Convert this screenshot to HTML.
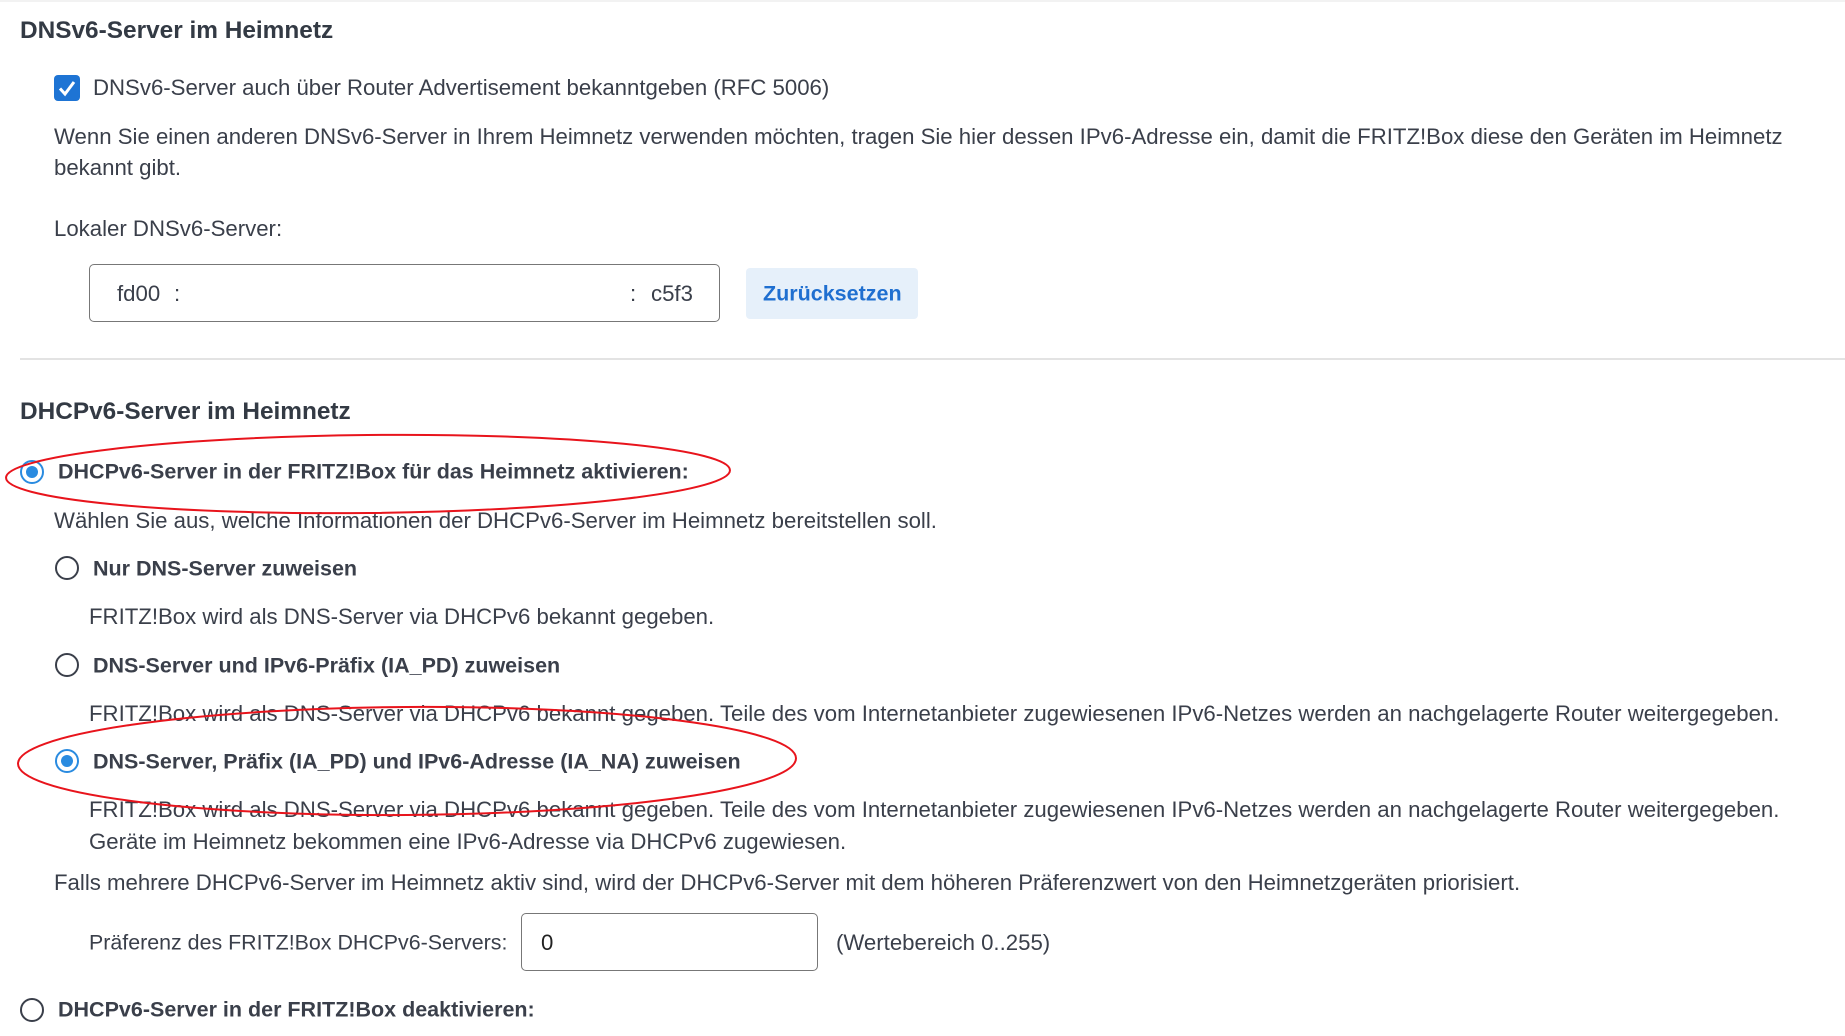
<!DOCTYPE html>
<html><head><meta charset="utf-8"><style>
*{margin:0;padding:0;box-sizing:border-box}
body{width:1845px;height:1036px;background:#fff;font-family:"Liberation Sans",sans-serif;color:#3a3f4a;font-size:22.2px;position:relative;overflow:hidden}
.t{position:absolute;white-space:nowrap;line-height:1;transform:translateY(-50%)}
.b{font-weight:bold;font-size:21.5px}
.h{font-size:24.4px;font-weight:bold;color:#333a44}
.r{position:absolute;width:24px;height:24px;border-radius:50%;border:2.5px solid #3a3f4a;transform:translate(-50%,-50%)}
.r.on{border-color:#2a8be0}
.r.on::after{content:"";position:absolute;left:3.5px;top:3.5px;width:12px;height:12px;border-radius:50%;background:#2a8be0}
</style></head><body>
<div style="position:absolute;left:0;top:0;width:1845px;height:2px;background:#f2f2f2"></div>
<div class="t h" style="left:20px;top:31px">DNSv6-Server im Heimnetz</div>
<div style="position:absolute;left:54px;top:75px;width:26px;height:26px;border-radius:4px;background:#1e74d4"></div>
<svg style="position:absolute;left:54px;top:75px" width="26" height="26"><path d="M6 13.5 L11 19 L20 7" stroke="#fff" stroke-width="3" fill="none"/></svg>
<div class="t" style="left:93px;top:88px">DNSv6-Server auch über Router Advertisement bekanntgeben (RFC 5006)</div>
<div class="t" style="left:54px;top:137px">Wenn Sie einen anderen DNSv6-Server in Ihrem Heimnetz verwenden möchten, tragen Sie hier dessen IPv6-Adresse ein, damit die FRITZ!Box diese den Geräten im Heimnetz</div>
<div class="t" style="left:54px;top:168px">bekannt gibt.</div>
<div class="t" style="left:54px;top:229px">Lokaler DNSv6-Server:</div>
<div style="position:absolute;left:89px;top:264px;width:631px;height:58px;border:1.5px solid #777;border-radius:5px"></div>
<div class="t" style="left:117px;top:294px">fd00</div>
<div class="t" style="left:174px;top:294px">:</div>
<div class="t" style="left:630px;top:294px">:</div>
<div class="t" style="left:651px;top:294px">c5f3</div>
<div style="position:absolute;left:746px;top:268px;width:172px;height:51px;background:#e6f0fa;border-radius:4px"></div>
<div class="t b" style="left:763px;top:294px;color:#1f6fd0">Zurücksetzen</div>
<div style="position:absolute;left:20px;top:358px;width:1825px;height:2px;background:#e3e3e3"></div>
<div class="t h" style="left:20px;top:412px">DHCPv6-Server im Heimnetz</div>
<div class="r on" style="left:32px;top:472px"></div>
<div class="t b" style="left:58px;top:472px">DHCPv6-Server in der FRITZ!Box für das Heimnetz aktivieren:</div>
<div class="t" style="left:54px;top:521px">Wählen Sie aus, welche Informationen der DHCPv6-Server im Heimnetz bereitstellen soll.</div>
<div class="r" style="left:67px;top:568px"></div>
<div class="t b" style="left:93px;top:569px">Nur DNS-Server zuweisen</div>
<div class="t" style="left:89px;top:617px">FRITZ!Box wird als DNS-Server via DHCPv6 bekannt gegeben.</div>
<div class="r" style="left:67px;top:665px"></div>
<div class="t b" style="left:93px;top:666px">DNS-Server und IPv6-Präfix (IA_PD) zuweisen</div>
<div class="t" style="left:89px;top:714px">FRITZ!Box wird als DNS-Server via DHCPv6 bekannt gegeben. Teile des vom Internetanbieter zugewiesenen IPv6-Netzes werden an nachgelagerte Router weitergegeben.</div>
<div class="r on" style="left:67px;top:761px"></div>
<div class="t b" style="left:93px;top:762px">DNS-Server, Präfix (IA_PD) und IPv6-Adresse (IA_NA) zuweisen</div>
<div class="t" style="left:89px;top:810px">FRITZ!Box wird als DNS-Server via DHCPv6 bekannt gegeben. Teile des vom Internetanbieter zugewiesenen IPv6-Netzes werden an nachgelagerte Router weitergegeben.</div>
<div class="t" style="left:89px;top:842px">Geräte im Heimnetz bekommen eine IPv6-Adresse via DHCPv6 zugewiesen.</div>
<div class="t" style="left:54px;top:883px">Falls mehrere DHCPv6-Server im Heimnetz aktiv sind, wird der DHCPv6-Server mit dem höheren Präferenzwert von den Heimnetzgeräten priorisiert.</div>
<div class="t" style="left:89px;top:943px;font-size:21.4px">Präferenz des FRITZ!Box DHCPv6-Servers:</div>
<div style="position:absolute;left:521px;top:913px;width:297px;height:58px;border:1.5px solid #777;border-radius:5px"></div>
<div class="t" style="left:541px;top:943px;color:#222">0</div>
<div class="t" style="left:836px;top:943px">(Wertebereich 0..255)</div>
<div class="r" style="left:32px;top:1010px"></div>
<div class="t b" style="left:58px;top:1010px">DHCPv6-Server in der FRITZ!Box deaktivieren:</div>
<svg style="position:absolute;left:0;top:0" width="1845" height="1036">
<ellipse cx="368" cy="474" rx="362" ry="39" fill="none" stroke="#e8141c" stroke-width="2" transform="rotate(-0.6 368 474)"/>
<ellipse cx="407" cy="761" rx="389" ry="54" fill="none" stroke="#e8141c" stroke-width="2" transform="rotate(-0.4 407 761)"/>
</svg>
</body></html>
